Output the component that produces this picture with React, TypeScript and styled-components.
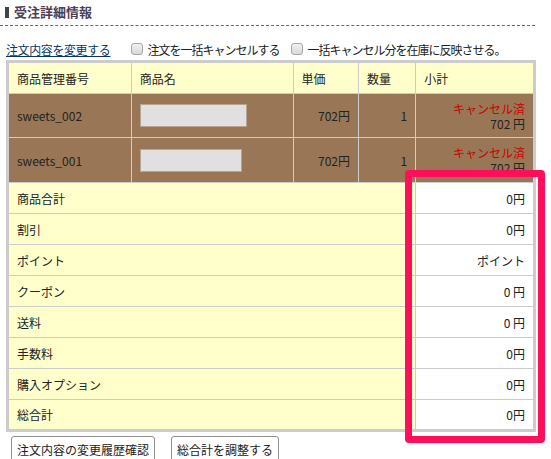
import React from 'react';
import styled, { createGlobalStyle } from 'styled-components';

const GlobalStyle = createGlobalStyle`
  html, body {
    margin: 0;
    padding: 0;
    background: #ffffff;
  }
  body {
    font-family: "Noto Sans CJK JP", "Noto Sans", sans-serif;
    font-size: 12px;
    color: #333333;
  }
`;

const Page = styled.div`
  position: relative;
  width: 551px;
  height: 459px;
  overflow: hidden;
`;

const Heading = styled.div`
  display: flex;
  align-items: center;
  gap: 5px;
  height: 26px;
  margin: 0 16px 0 0;
  padding: 0 0 0 5px;
  border-bottom: 1px dashed #666666;
  box-sizing: border-box;
`;

const HeadingBar = styled.span`
  display: block;
  width: 4px;
  height: 11px;
  margin-top: -1px;
  background: #444444;
`;

const HeadingText = styled.span`
  font-size: 13px;
  font-weight: bold;
  color: #4d3f55;
  line-height: 1;
  margin-top: -2px;
`;

const Options = styled.div`
  display: flex;
  align-items: center;
  height: 18px;
  margin: 14px 0 2px 6px;
`;

const Link = styled.a`
  color: #0b3566;
  text-decoration: underline;
  letter-spacing: -0.4px;
  margin-right: 21px;
  cursor: pointer;
`;

const CheckLabel = styled.label`
  display: flex;
  align-items: center;
  gap: 4px;
  margin-right: 12px;
  color: #222222;
  letter-spacing: -1px;
`;

const CheckBox = styled.input`
  appearance: none;
  width: 12px;
  height: 12px;
  margin: 0;
  border: 1px solid #a8a8a8;
  border-radius: 3px;
  background: linear-gradient(#f2f2f2, #d8d8d8);
`;

const Table = styled.table`
  margin-left: 6px;
  width: 530px;
  border-collapse: collapse;
  border: 3px solid #cccccc;
  table-layout: fixed;
`;

const Th = styled.th`
  height: 30px;
  padding: 0 8px;
  font-weight: normal;
  text-align: left;
  background: #ffffcc;
  border: 1px solid #cccccc;
  color: #222222;
`;

const Td = styled.td<{ $tone: 'brown' | 'yellow' | 'white'; $align?: 'left' | 'right' }>`
  padding: 0 8px;
  border: 1px solid #cccccc;
  text-align: ${(p) => p.$align || 'left'};
  background: ${(p) =>
    p.$tone === 'brown' ? '#997756' : p.$tone === 'yellow' ? '#ffffcc' : '#ffffff'};
  color: #222222;
  line-height: 15px;
`;

const ItemRow = styled.tr<{ $h: number }>`
  height: ${(p) => p.$h}px;
`;

const SumRow = styled.tr`
  height: 31px;
`;

const NameBox = styled.div<{ $w: number }>`
  width: ${(p) => p.$w}px;
  height: 21px;
  background: #e0e0e0;
  border: 1px solid #b8a48e;
`;

const SubLine = styled.div<{ $red?: boolean }>`
  height: 15px;
  line-height: 15px;
  overflow: visible;
  color: ${(p) => (p.$red ? '#cc0000' : '#222222')};
`;

const Buttons = styled.div`
  display: flex;
  gap: 16px;
  margin: 4px 0 0 11px;
`;

const Button = styled.button`
  font-family: "Noto Sans CJK JP", "Noto Sans", sans-serif;
  font-size: 12px;
  color: #222222;
  background: #ffffff;
  border: 1px solid #8f8f8f;
  border-radius: 3px;
  padding: 3px 5px;
  height: 26px;
  cursor: pointer;
`;

const Highlight = styled.div`
  position: absolute;
  left: 405px;
  top: 170px;
  width: 140px;
  height: 273px;
  box-sizing: border-box;
  border: 7px solid #ff0f5a;
  border-radius: 4px;
  pointer-events: none;
`;

const items = [
  { code: 'sweets_002', w: 105, h: 44 },
  { code: 'sweets_001', w: 100, h: 45 },
];

const sums = [
  ['商品合計', '0円'],
  ['割引', '0円'],
  ['ポイント', 'ポイント'],
  ['クーポン', '0 円'],
  ['送料', '0 円'],
  ['手数料', '0円'],
  ['購入オプション', '0円'],
  ['総合計', '0円'],
];

export default function App() {
  return (
    <Page>
      <GlobalStyle />
      <Heading>
        <HeadingBar />
        <HeadingText>受注詳細情報</HeadingText>
      </Heading>

      <Options>
        <Link>注文内容を変更する</Link>
        <CheckLabel>
          <CheckBox type="checkbox" />
          注文を一括キャンセルする
        </CheckLabel>
        <CheckLabel>
          <CheckBox type="checkbox" />
          一括キャンセル分を在庫に反映させる。
        </CheckLabel>
      </Options>

      <Table>
        <colgroup>
          <col style={{ width: 123 }} />
          <col style={{ width: 161 }} />
          <col style={{ width: 65 }} />
          <col style={{ width: 57 }} />
          <col style={{ width: 118 }} />
        </colgroup>
        <thead>
          <tr>
            <Th>商品管理番号</Th>
            <Th>商品名</Th>
            <Th>単価</Th>
            <Th>数量</Th>
            <Th>小計</Th>
          </tr>
        </thead>
        <tbody>
          {items.map((it) => (
            <ItemRow key={it.code} $h={it.h}>
              <Td $tone="brown">{it.code}</Td>
              <Td $tone="brown">
                <NameBox $w={it.w} />
              </Td>
              <Td $tone="brown" $align="right">702円</Td>
              <Td $tone="brown" $align="right">1</Td>
              <Td $tone="brown" $align="right">
                <SubLine $red>キャンセル済</SubLine>
                <SubLine>702 円</SubLine>
              </Td>
            </ItemRow>
          ))}
          {sums.map(([label, value]) => (
            <SumRow key={label}>
              <Td $tone="yellow" colSpan={4}>{label}</Td>
              <Td $tone="white" $align="right">{value}</Td>
            </SumRow>
          ))}
        </tbody>
      </Table>

      <Buttons>
        <Button>注文内容の変更履歴確認</Button>
        <Button>総合計を調整する</Button>
      </Buttons>

      <Highlight />
    </Page>
  );
}
